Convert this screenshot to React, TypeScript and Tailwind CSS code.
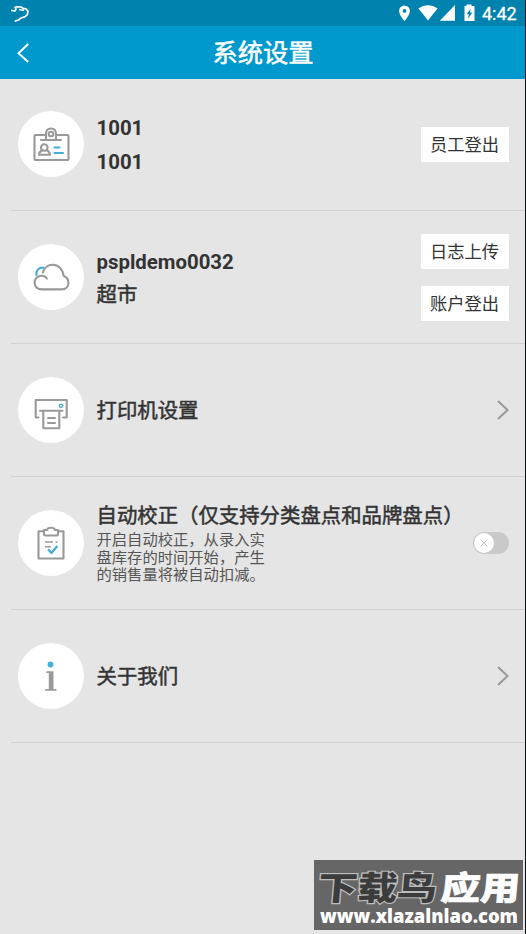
import type { ReactNode } from 'react';

const cjkBold = "[-webkit-text-stroke:0.5px_currentColor]";

function Row({ icon, children, action }: { icon: ReactNode; children: ReactNode; action?: ReactNode }) {
  return (
    <section className="ml-[11px] flex h-[132.9px] items-center border-b-[1.5px] border-[#d2d2d2] pl-[6.5px] pr-[16.5px]">
      <div className="flex size-[66px] shrink-0 items-center justify-center rounded-full bg-white">{icon}</div>
      <div className="ml-[13px] min-w-0 flex-1 pt-[3px] text-[20.4px] text-[#333]">{children}</div>
      {action}
    </section>
  );
}

function Icon({ children }: { children: ReactNode }) {
  return (
    <svg className="size-[66px]" viewBox="0 0 66 66" fill="none" stroke="#999" strokeWidth="2.1" strokeLinecap="round" strokeLinejoin="round">
      {children}
    </svg>
  );
}

function ActionButton({ children }: { children: ReactNode }) {
  return <button className="h-[35px] w-[88px] whitespace-nowrap bg-white pt-px text-center text-[17.3px] leading-[35px] text-[#333]">{children}</button>;
}

function Chevron() {
  return (
    <svg className="h-5 w-3" viewBox="0 0 12 20" fill="none" stroke="#999" strokeWidth="2">
      <path d="M1 1 10.5 10 1 19" />
    </svg>
  );
}

export default function App() {
  return (
    <div className="relative h-[934px] w-[526px] overflow-hidden border-r border-[#05131b] bg-[#e5e5e5] font-[Roboto,'Noto_Sans_CJK_SC',sans-serif]">
      <div className="flex h-[26px] items-center justify-between bg-[#0082ae] pl-[10px] pr-[8px] text-white">
        <svg className="h-5 w-5" viewBox="0 0 20 20" fill="none" stroke="#fff" strokeWidth="1.7" strokeLinejoin="round">
          <path d="M1 7.3 5 8l1-2.2L5 4.5 6.5 3.8l4.5.2 2 1.3 3 .6 2 2.5-.7 3.2-2.2 2-4.6 1.6-1.6 1.6-4.2 1.5M9 6.5l2.5.5 2.5.3" />
        </svg>
        <div className="flex items-center">
          <svg className="h-[22px] w-[84px]" viewBox="0 0 84 22" fill="#fff">
            <path fillRule="evenodd" d="M11.5 3.5a5.4 5.4 0 0 0-5.4 5.4c0 4 5.4 10 5.4 10s5.4-6 5.4-10a5.4 5.4 0 0 0-5.4-5.4Zm0 3.5a1.9 1.9 0 1 1 0 3.8 1.9 1.9 0 0 1 0-3.8Z" />
            <path d="M25.5 6.5c5.5-4.5 13.5-4.5 19 0L35 18.5Z" />
            <path d="M62 3v15.8H46.8Z" />
            <path fillRule="evenodd" d="M73.5 2.5h5V4h3v15h-10V4h2Zm4.2 4-4 5.8h2.2L75 16.8l4.3-6.3H77Z" />
          </svg>
          <span className="ml-[5px] w-[35px] whitespace-nowrap pt-[1px] text-[18px] leading-none [-webkit-text-stroke:0.3px_currentColor]">4:42</span>
        </div>
      </div>
      <header className="flex h-[53px] items-center bg-[#0099cd] pl-[17px] pr-[28px] text-white">
        <svg className="h-5 w-3" viewBox="0 0 12 20" fill="none" stroke="#fff" strokeWidth="2"><path d="m11.2 1-9.7 9.2 9.7 8.8" /></svg>
        <h1 className={`flex-1 pt-[3px] text-center text-[25.3px] leading-none ${cjkBold}`}>系统设置</h1>
      </header>
      <main className="-mt-[0.6px]">
        <Row
          icon={<Icon>
            <path d="M27 24H17.5q-1 0-1 1v23q0 1 1 1h32q1 0 1-1V25q0-1-1-1H39M23 29H43M28 29v-6q0-5.5 5-5.5t5 5.5v6" />
            <circle cx="33" cy="23" r="2.3" />
            <circle cx="26.3" cy="36.5" r="3.3" />
            <path d="M24 39.5q-2.8 1-3 4.3h11q-.3-3.3-3-4.3" />
            <path stroke="#43aedb" d="M36.5 36.5h5M36.5 42h8.5" />
          </Icon>}
          action={<ActionButton>员工登出</ActionButton>}
        >
          <div className="font-bold leading-[33.5px]"><p>1001</p><p>1001</p></div>
        </Row>
        <Row
          icon={<Icon>
            <path stroke="#43aedb" d="M18.5 31q-.6-3.5 1.7-5.7t5.4-1.5" />
            <path d="M28.8 34.5q-1.8-2.8-5.2-2.8c-4 0-7 2.9-7 6.8s2.9 6.9 7 6.9h20c4.2 0 6.9-2.9 6.9-6.6 0-3.3-1.6-5.6-4.9-7.1-.7-6.2-4.9-10.9-11-10.9-4.9 0-8.6 3.4-9.7 7.8" />
          </Icon>}
          action={<div className="flex flex-col gap-[17px]"><ActionButton>日志上传</ActionButton><ActionButton>账户登出</ActionButton></div>}
        >
          <p className="font-bold leading-[33px]">pspldemo0032</p>
          <p className={`leading-[33px] ${cjkBold}`}>超市</p>
        </Row>
        <Row
          icon={<Icon>
            <path d="M20.5 40.5h-2.8V23h31v17.5H45M22 33.8h22.5M25.3 34v17.3h16V34M30 41h7M30 46h7" />
            <circle cx="43" cy="28.8" r="1.7" stroke="#43aedb" strokeWidth="1.4" />
          </Icon>}
          action={<Chevron />}
        >
          <p className={cjkBold}>打印机设置</p>
        </Row>
        <Row
          icon={<Icon>
            <path d="M26 21.3h-5.5V48.5h25V21.3H40M26 20h3q.5-2.2 4-2.2t4 2.2h3v4.3q0 1.2-1.2 1.2H27.3q-1.3 0-1.3-1.2Z" />
            <path strokeLinecap="butt" strokeWidth="1.6" d="M27 32h8M37.5 32h2M27 36.8h6" />
            <path stroke="#43aedb" strokeWidth="2.3" strokeLinecap="butt" d="m30 39.2 3.5 3.8 5.8-7" />
          </Icon>}
          action={
            <div className="mb-px flex h-[22px] w-9 shrink-0 items-center rounded-full bg-[#c9c9c9] pl-px">
              <div className="flex size-5 items-center justify-center rounded-full bg-white">
                <svg className="size-2" viewBox="0 0 8 8" stroke="#c7c7c7"><path d="m.5.5 7 7m0-7-7 7" /></svg>
              </div>
            </div>
          }
        >
          <h2 className={`whitespace-nowrap leading-[25px] ${cjkBold}`}>自动校正（仅支持分类盘点和品牌盘点）</h2>
          <p className="whitespace-nowrap pt-[3px] text-[15.3px] leading-[17.7px] text-[#555]">
            开启自动校正，从录入实<br />盘库存的时间开始，产生<br />的销售量将被自动扣减。
          </p>
        </Row>
        <Row
          icon={<Icon>
            <circle cx="32.5" cy="21.5" r="2.9" fill="#43aedb" stroke="none" />
            <path fill="#999" stroke="none" d="M28.3 28.2h7.2v17.7h3v1.8H27.2v-1.8h3.6V30h-2.5Z" />
          </Icon>}
          action={<Chevron />}
        >
          <p className={cjkBold}>关于我们</p>
        </Row>
      </main>
      <div className="absolute left-[314px] top-[860px] h-[70px] w-[209px] bg-[#666]">
        <svg className="h-[70px] w-[209px] overflow-visible" viewBox="0 0 209 70" fontFamily="'Noto Sans CJK SC', sans-serif" fontWeight="900">
          <g transform="translate(0 40) skewX(-5)">
            <text x="3" y="0" fontSize="33" textLength="119" lengthAdjust="spacingAndGlyphs" fill="#3c3c3c" stroke="#bdbdbd" strokeWidth="2.4" paintOrder="stroke">下载鸟</text>
            <text x="126" y="0" fontSize="33" textLength="79" lengthAdjust="spacingAndGlyphs" fill="#fff" stroke="#fff" strokeWidth="0.6">应用</text>
          </g>
          <text x="6" y="63" fontFamily="'Open Sans', sans-serif" fontWeight="800" fontSize="19" textLength="198" lengthAdjust="spacingAndGlyphs" fill="#fff">www.xlazalnlao.com</text>
        </svg>
      </div>
    </div>
  );
}
